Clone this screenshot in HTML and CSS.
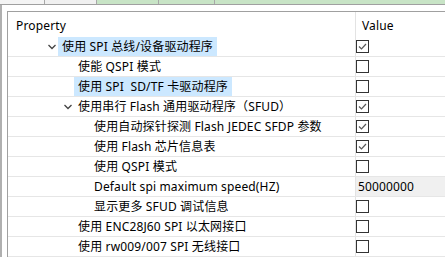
FILE: index.html
```html
<!DOCTYPE html>
<html>
<head>
<meta charset="utf-8">
<link rel="stylesheet" href="styles.css">
</head>
<body>
<div class="tabstrip">
  <div class="tab tab-a"></div>
  <div class="tab tab-b"></div>
  <div class="tab tab-c"></div>
  <div class="tab tab-d"></div>
  <div class="tab tab-e"></div>
</div>
<div class="window">
  <div class="panel">
    <div class="head">
      <div class="hcell name-h">Property</div>
      <div class="hcell value-h">Value</div>
    </div>

    <div class="row">
      <div class="name l1"><span class="tog"><svg width="8" height="6" viewBox="0 0 8 6"><polyline points="0.5,1 4,4.5 7.5,1" fill="none" stroke="#444" stroke-width="1.3"/></svg></span><span class="label sel">使用 SPI 总线/设备驱动程序</span></div>
      <div class="val"><span class="cb on"><svg width="11" height="11" viewBox="0 0 11 11"><polyline points="2,5.5 4.5,8 9,3" fill="none" stroke="#5a5a5a" stroke-width="1.2"/></svg></span></div>
    </div>
    <div class="row">
      <div class="name l2"><span class="tog"></span><span class="label">使能 QSPI 模式</span></div>
      <div class="val"><span class="cb"></span></div>
    </div>
    <div class="row">
      <div class="name l2"><span class="tog"></span><span class="label sel">使用 SPI&nbsp; SD/TF 卡驱动程序</span></div>
      <div class="val"><span class="cb"></span></div>
    </div>
    <div class="row">
      <div class="name l2"><span class="tog"><svg width="8" height="6" viewBox="0 0 8 6"><polyline points="0.5,1 4,4.5 7.5,1" fill="none" stroke="#444" stroke-width="1.3"/></svg></span><span class="label">使用串行 Flash 通用驱动程序（SFUD）</span></div>
      <div class="val"><span class="cb on"><svg width="11" height="11" viewBox="0 0 11 11"><polyline points="2,5.5 4.5,8 9,3" fill="none" stroke="#5a5a5a" stroke-width="1.2"/></svg></span></div>
    </div>
    <div class="row">
      <div class="name l3"><span class="tog"></span><span class="label">使用自动探针探测 Flash JEDEC SFDP 参数</span></div>
      <div class="val"><span class="cb on"><svg width="11" height="11" viewBox="0 0 11 11"><polyline points="2,5.5 4.5,8 9,3" fill="none" stroke="#5a5a5a" stroke-width="1.2"/></svg></span></div>
    </div>
    <div class="row">
      <div class="name l3"><span class="tog"></span><span class="label">使用 Flash 芯片信息表</span></div>
      <div class="val"><span class="cb on"><svg width="11" height="11" viewBox="0 0 11 11"><polyline points="2,5.5 4.5,8 9,3" fill="none" stroke="#5a5a5a" stroke-width="1.2"/></svg></span></div>
    </div>
    <div class="row">
      <div class="name l3"><span class="tog"></span><span class="label">使用 QSPI 模式</span></div>
      <div class="val"><span class="cb"></span></div>
    </div>
    <div class="row">
      <div class="name l3"><span class="tog"></span><span class="label">Default spi maximum speed(HZ)</span></div>
      <div class="val text">50000000</div>
    </div>
    <div class="row">
      <div class="name l3"><span class="tog"></span><span class="label">显示更多 SFUD 调试信息</span></div>
      <div class="val"><span class="cb"></span></div>
    </div>
    <div class="row">
      <div class="name l2"><span class="tog"></span><span class="label">使用 ENC28J60 SPI 以太网接口</span></div>
      <div class="val"><span class="cb"></span></div>
    </div>
    <div class="row">
      <div class="name l2"><span class="tog"></span><span class="label">使用 rw009/007 SPI 无线接口</span></div>
      <div class="val"><span class="cb"></span></div>
    </div>
  </div>
</div>
</body>
</html>
```

FILE: styles.css
```css
html, body {
  margin: 0;
  padding: 0;
  background: #ffffff;
}
body {
  width: 445px;
  height: 257px;
  overflow: hidden;
  font-family: "Noto Sans", "Noto Sans CJK SC", sans-serif;
  font-size: 12px;
  color: #000;
}
.tabstrip {
  display: flex;
  height: 4px;
  border-bottom: 1px solid #a0a0a0;
  background: #c8e4c6;
}
.tab {
  height: 4px;
  box-sizing: border-box;
  border-right: 1px solid #a8a8a8;
}
.tab-a { width: 45px; background: #f4f4f4; }
.tab-b { width: 52px; background: #f0f0f0; }
.tab-c { width: 62px; }
.tab-d { width: 56px; }
.tab-e { flex: 1; border-right: none; }
.window {
  border-left: 2px solid #b0b0b0;
  padding: 6px 0 0 5px;
  height: 252px;
  box-sizing: border-box;
}
.panel {
  border-top: 1px solid #a0a0a0;
  border-left: 1px solid #a0a0a0;
  height: 100%;
  box-sizing: border-box;
}
.head {
  display: grid;
  grid-template-columns: 347px 1fr;
  height: 25px;
}
.hcell {
  display: flex;
  align-items: center;
  padding-top: 2px;
  letter-spacing: 0.15px;
}
.name-h {
  padding-left: 8px;
}
.value-h {
  border-left: 1px solid #e3e3e3;
  padding-left: 6px;
}
.row {
  display: grid;
  grid-template-columns: 347px 1fr;
  height: 20px;
  box-sizing: border-box;
  border-bottom: 1px solid #e6e6e6;
}
.name {
  display: flex;
  align-items: stretch;
  white-space: nowrap;
}
.l1 { padding-left: 34px; }
.l2 { padding-left: 50px; }
.l3 { padding-left: 66px; }
.tog {
  width: 16px;
  flex: none;
  display: flex;
  align-items: center;
  padding-left: 6px;
  box-sizing: border-box;
}
.label {
  display: flex;
  align-items: center;
  padding: 0 4px;
  line-height: 19px;
  letter-spacing: 0.15px;
}
.sel {
  background: #cce8ff;
}
.val {
  border-left: 1px solid #e3e3e3;
  display: flex;
  align-items: center;
}
.val.text {
  background: #f0f0f0;
  padding-left: 2px;
  letter-spacing: 0.15px;
}
.cb {
  width: 13px;
  height: 13px;
  box-sizing: border-box;
  border: 1px solid #333333;
  background: #fff;
  display: flex;
  align-items: center;
  justify-content: center;
}
.cb svg {
  display: block;
}
```
